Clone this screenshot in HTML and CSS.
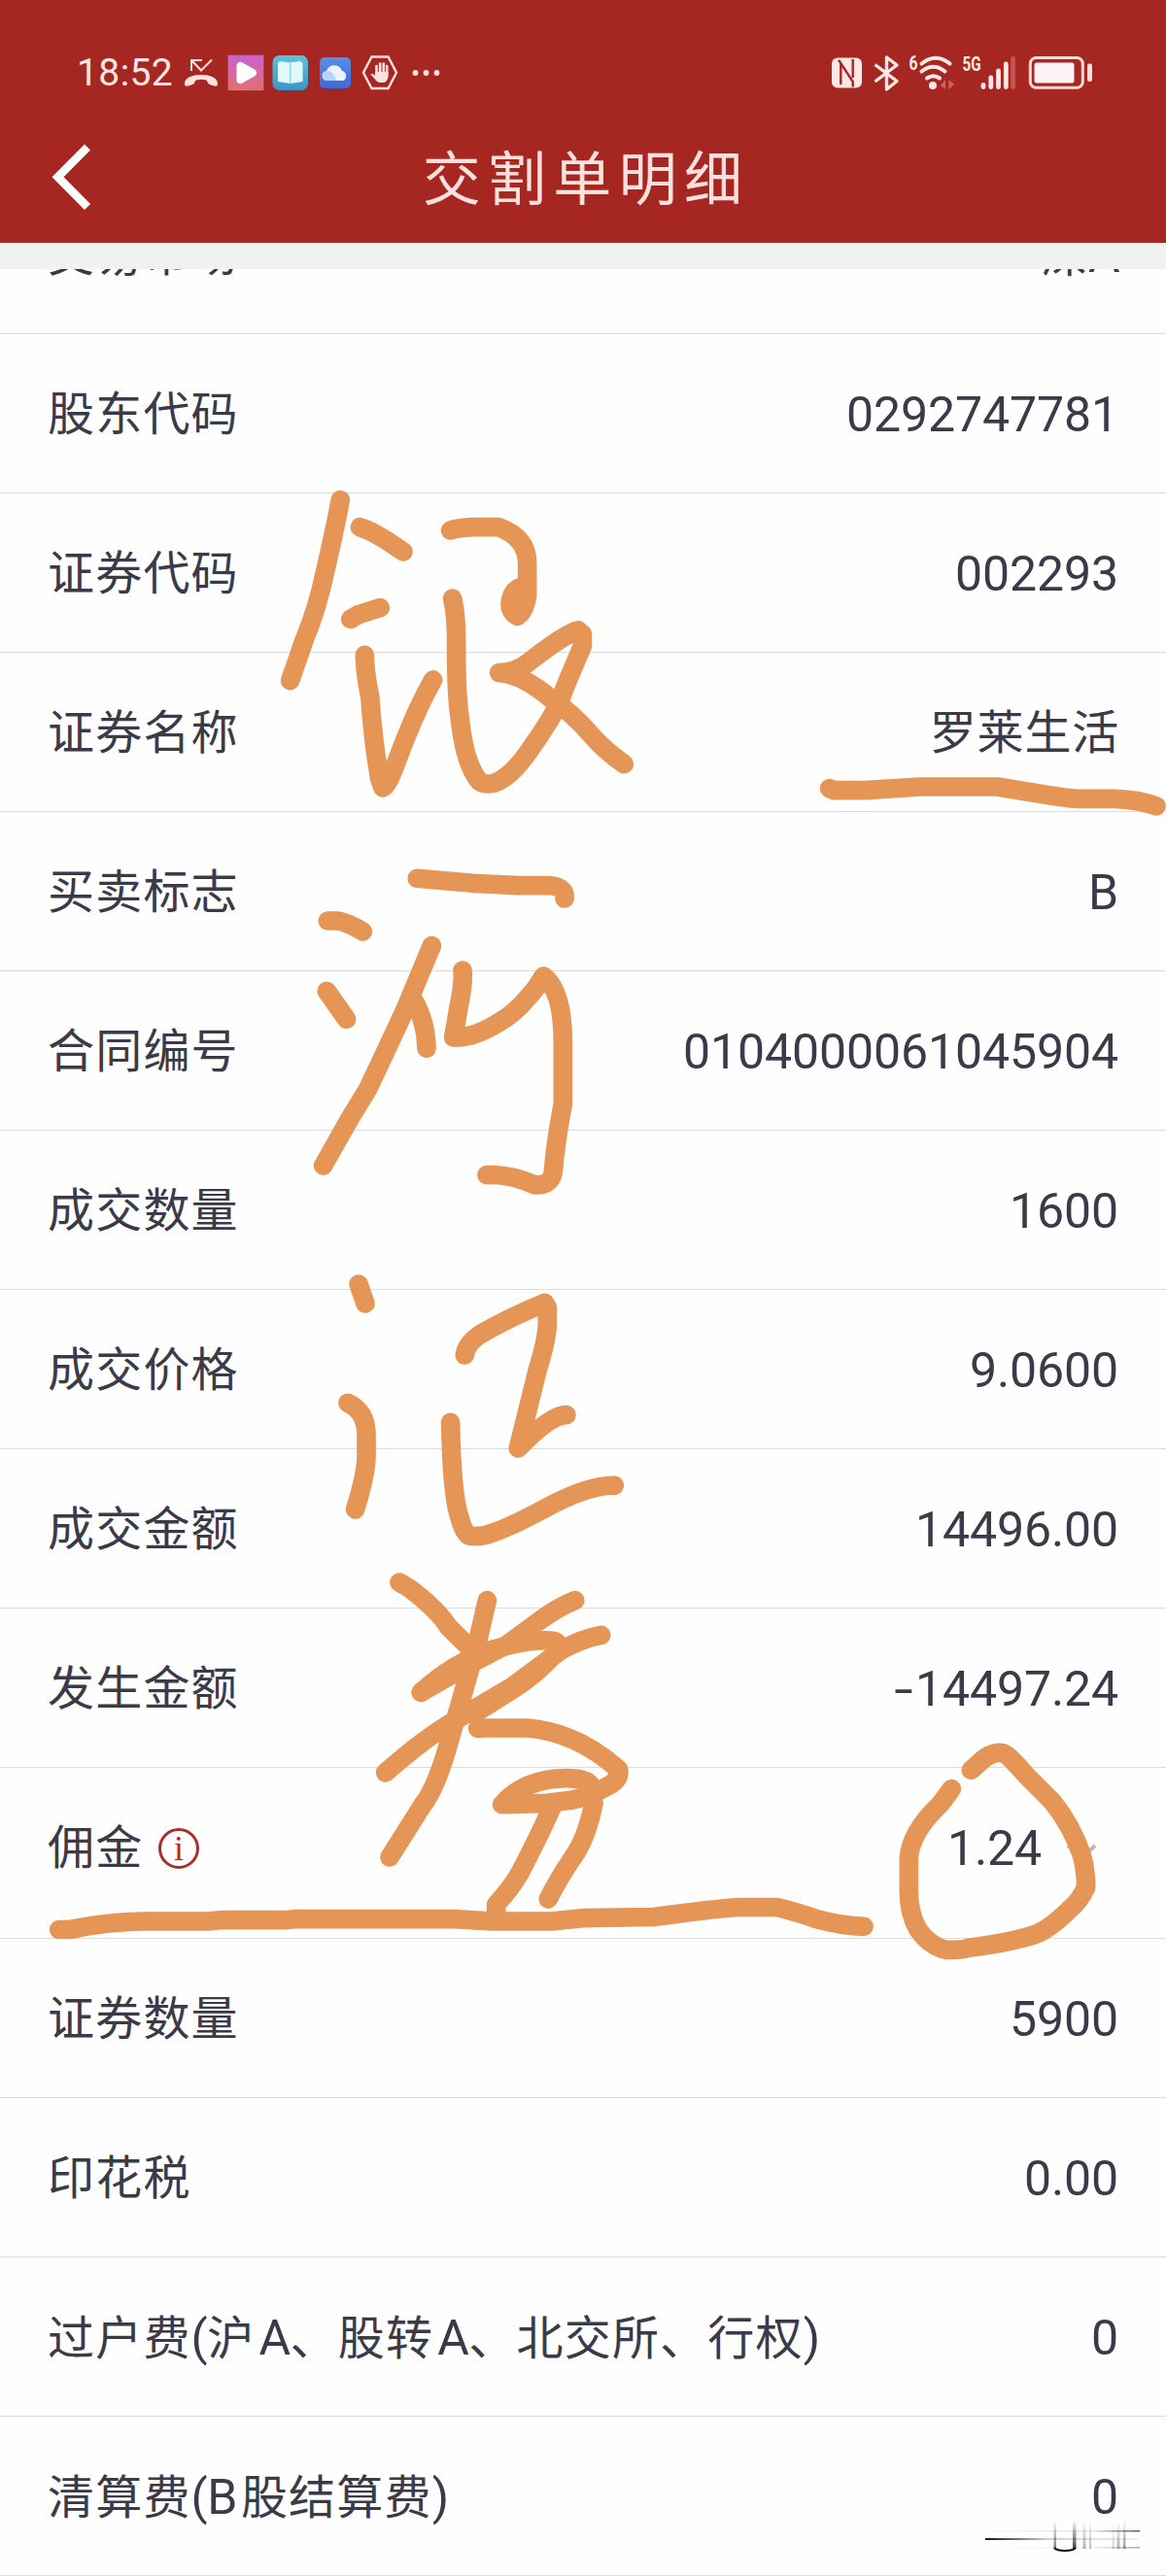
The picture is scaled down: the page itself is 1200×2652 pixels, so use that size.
FILE: index.html
```
<!DOCTYPE html>
<html lang="zh-CN">
<head>
    <meta charset="UTF-8">
    <meta name="viewport" content="width=device-width, initial-scale=1.0">
    <title>交割单明细</title>
    <link rel="stylesheet" href="styles.css">
</head>
<body>

    <header class="header">
        <div class="status-bar">
            <span class="time">18:52</span>
            <svg class="status-left" viewBox="184 50 272 50">
                <defs>
                    <linearGradient id="play-bg" x1="0" y1="0" x2="0" y2="1">
                        <stop offset="0" stop-color="#c763d3"/>
                        <stop offset="1" stop-color="#e0706f"/>
                    </linearGradient>
                    <linearGradient id="book-bg" x1="0" y1="0" x2="0" y2="1">
                        <stop offset="0" stop-color="#5cc3dc"/>
                        <stop offset="1" stop-color="#3f93c6"/>
                    </linearGradient>
                    <linearGradient id="cloud-bg" x1="0" y1="0" x2="0" y2="1">
                        <stop offset="0" stop-color="#5a8ee6"/>
                        <stop offset="1" stop-color="#3d68d8"/>
                    </linearGradient>
                </defs>
                <!-- missed call -->
                <path d="M197 73V62H208M197 62L207 72.500L218 61.500" fill="none" stroke="#ffe1dd" stroke-width="2"/>
                <path d="M190 86C190 80 198 77 207 77S224 80 224 86C224 90 221 89 215 86.500C213 85.500 214 83 212 82.500Q207 81 202 82.500C200 83 201 85.500 199 86.500C193 89 190 90 190 86Z" fill="#ffe1dd"/>
                <!-- video -->
                <rect x="234.600" y="56.700" width="36.800" height="36.400" fill="url(#play-bg)"/>
                <path d="M247.500 68V82L260 75Z" fill="#c25a9c" stroke="#fff" stroke-width="8" stroke-linejoin="round"/>
                <!-- book -->
                <rect x="280.500" y="57" width="36.500" height="36" rx="7" fill="url(#book-bg)"/>
                <path d="M286 65L288 63L298 64.500L309 63L311.500 65V84L299 86L286 84Z" fill="#e2f9fc"/>
                <path d="M298.700 65V86" stroke="#8fd6e6" stroke-width="1.500"/>
                <!-- cloud -->
                <rect x="329" y="59" width="32" height="32" rx="5" fill="url(#cloud-bg)"/>
                <path d="M337 83A5 5 0 0 1 336 73A8.500 8.500 0 0 1 352 73A5.300 5.300 0 0 1 353 83Z" fill="#eaf2ff"/>
                <path d="M337 83A5 5 0 0 1 337 73Q343 73 346 83Z" fill="#b8d2fa"/>
                <!-- hand -->
                <path d="M382.500 58.500H399.500L408 74.800L399.500 91H382.500L374 74.800Z" fill="none" stroke="#ffe1dd" stroke-width="2.400"/>
                <path d="M387.500 77V68M391.200 76V65.500M394.800 76V65.500M398.200 77V68" fill="none" stroke="#ffe1dd" stroke-width="2.600" stroke-linecap="round"/>
                <path d="M386.200 74H399.500V79Q398.500 85 394 85H391Q388 85 385.500 81L381.500 76.500Q382.500 74.500 386.200 78Z" fill="#ffe1dd"/>
                <circle cx="427.500" cy="75" r="2.900" fill="#ffe1dd"/>
                <circle cx="438.500" cy="75" r="2.900" fill="#ffe1dd"/>
                <circle cx="449.500" cy="75" r="2.900" fill="#ffe1dd"/>
            </svg>
            <svg class="status-right" viewBox="850 50 280 50">
                <!-- nfc -->
                <rect x="856" y="59.500" width="31" height="31" rx="6" fill="#ffe8e5"/>
                <path d="M865.300 87V65L877.700 84V89.500M865.300 65L863 62M877.700 61V80" fill="none" stroke="#a52823" stroke-width="2.400"/>
                <!-- bluetooth -->
                <path d="M900.500 66.500L923 83.500L912.500 92V59L923 67L900.500 84" fill="none" stroke="#ffe8e5" stroke-width="3.400" stroke-linejoin="round"/>
                <text class="tiny" x="935.500" y="71.500" textLength="9" lengthAdjust="spacingAndGlyphs">6</text>
                <!-- wifi -->
                <g fill="none" stroke="#ffe8e5" stroke-width="4" stroke-linecap="round">
                    <path d="M948.500 65.500Q963 54 977.500 65.500"/>
                    <path d="M948.500 73.500Q960.500 64 972.500 73.500"/>
                    <path d="M954 80.500Q960.500 76 967 80.500"/>
                </g>
                <circle cx="960" cy="88" r="4" fill="#ffe8e5"/>
                <path d="M973 82V92L968 88ZM976.500 82V92L982 87Z" fill="#c9635d"/>
                <text class="tiny" x="990.500" y="73" textLength="19" lengthAdjust="spacingAndGlyphs">5G</text>
                <!-- signal -->
                <g stroke="#ffe8e5" stroke-width="4.800" stroke-linecap="round">
                    <path d="M1012 87.500V89.500M1019.800 80V89.500M1027.500 73V89.500M1035.300 66V89.500"/>
                    <path d="M1042.500 60.500V89.500" stroke="#c9544f"/>
                </g>
                <!-- battery -->
                <rect x="1060.300" y="59.500" width="54" height="30.800" rx="6" fill="none" stroke="#ffdcd8" stroke-width="3"/>
                <rect x="1064.500" y="64.500" width="41" height="21" rx="2.500" fill="#fdf1f3"/>
                <rect x="1119" y="65.500" width="5" height="18.500" rx="2" fill="#ffe0dc"/>
            </svg>
        </div>
        <div class="title-bar">
            <svg class="back" viewBox="50 145 50 75">
                <path d="M90 151.500L59.500 182.300L90 213" fill="none" stroke="#fff" stroke-width="8.500"/>
            </svg>
            <h1>交割单明细</h1>
        </div>
    </header>
    <div class="strip"></div>

    <main class="list">
        <div class="row first"><span class="label">交易市场</span><span class="value cn">深<span class="en">A</span></span></div>
        <div class="row"><span class="label">股东代码</span><span class="value">0292747781</span></div>
        <div class="row"><span class="label">证券代码</span><span class="value">002293</span></div>
        <div class="row"><span class="label">证券名称</span><span class="value cn">罗莱生活</span></div>
        <div class="row"><span class="label">买卖标志</span><span class="value">B</span></div>
        <div class="row"><span class="label">合同编号</span><span class="value">0104000061045904</span></div>
        <div class="row"><span class="label">成交数量</span><span class="value">1600</span></div>
        <div class="row"><span class="label">成交价格</span><span class="value">9.0600</span></div>
        <div class="row"><span class="label">成交金额</span><span class="value">14496.00</span></div>
        <div class="row"><span class="label">发生金额</span><span class="value"><span class="minus">-</span>14497.24</span></div>
        <div class="row fee">
            <span class="label">佣金</span>
            <svg class="info" viewBox="0 0 44 44">
                <circle cx="22" cy="22" r="19.500" fill="none" stroke="#a5302d" stroke-width="3"/>
                <text x="22" y="33.500" text-anchor="middle">i</text>
            </svg>
            <span class="value">1.24</span>
            <svg class="arrow" viewBox="0 0 34 20">
                <path d="M3 3L17 16L31 3" fill="none" stroke="#b9b9bd" stroke-width="4"/>
            </svg>
        </div>
        <div class="row"><span class="label">证券数量</span><span class="value">5900</span></div>
        <div class="row"><span class="label">印花税</span><span class="value">0.00</span></div>
        <div class="row"><span class="label">过户费<span class="en">(</span>沪<span class="en gap">A</span>、股转<span class="en gap">A</span>、北交所、行权<span class="en">)</span></span><span class="value">0</span></div>
        <div class="row"><span class="label">清算费<span class="en">(B</span><span class="gap">股</span>结算费<span class="en">)</span></span><span class="value">0</span></div>
    </main>

    <!-- pen marks over the list -->
    <svg class="marks" viewBox="0 0 1200 2652">
        <g transform="translate(260 480) scale(.3333)">
            <path d="M271 104Q255 190 225 320Q200 440 160 535L116 662"/>
            <path d="M331 188Q375 200 465 264"/>
            <path d="M302 472L325 459L394 437"/>
            <path d="M346 583Q347 640 362 710Q372 850 392 965L402 993Q415 990 440 925Q500 760 557 660"/>
            <path d="M611 198Q640 188 690 188H760Q848 220 848 300V400Q840 450 817 463Q795 450 795 425Q800 385 825 375L835 420"/>
            <path d="M617 408Q629 460 629 540Q628 700 640 780Q655 920 700 973Q715 985 745 979Q800 960 860 870Q910 800 945 735Q960 690 1018 556V518L1005 507Q960 520 850 607Q810 637 761 638Q830 640 930 725Q990 765 1050 835Q1090 880 1147 920"/>
        </g>
        <g transform="translate(300 860) scale(.3333)">
            <path d="M388 133L560 148L700 155H800Q848 160 843 195"/>
            <path d="M112 264H145Q180 272 220 297"/>
            <path d="M109 481L170 568"/>
            <path d="M433 341L350 540Q290 670 235 785L180 875L98 1020"/>
            <path d="M375 505Q416 575 417 658"/>
            <path d="M528 417Q532 450 520 510L500 624Q560 628 640 578Q690 550 735 495Q755 475 778 435Q838 480 838 640V830Q815 950 808 1040Q800 1085 750 1079Q670 1045 603 1049"/>
        </g>
        <g transform="translate(320 1280) scale(.3333)">
            <path d="M147 126L168 186"/>
            <path d="M114 493Q171 520 171 590V660Q171 710 137 822"/>
            <path d="M475 345Q480 310 520 283Q610 230 722 184L730 198V250Q728 300 700 390L640 633Q740 530 789 530"/>
            <path d="M431 553Q435 780 460 850Q475 905 495 904H525Q580 895 720 820Q860 745 937 748"/>
        </g>
        <g transform="translate(340 1600) scale(.3333)">
            <path d="M213 87L245 106Q330 170 365 225L430 290"/>
            <path d="M484 143L450 290L375 550Q330 720 285 775L183 936"/>
            <path d="M755 143Q700 165 640 210L545 280L440 335L280 427"/>
            <path d="M280 427Q380 335 500 295Q620 262 680 267Q720 270 690 310Q640 370 560 420L440 495"/>
            <path d="M836 250Q780 260 715 295L560 410L400 505Q300 560 170 675"/>
            <path d="M455 538L480 537H610Q760 550 890 665Q895 695 860 715Q800 748 750 759L670 769L530 773Q600 693 730 692Q800 692 806 720L813 770Q790 880 750 935Q700 1010 673 1065"/>
            <path d="M685 780Q640 880 585 985Q560 1030 512 1082V1110"/>
        </g>
        <path class="line" d="M60.700 1986.500H72Q110 1978.500 147 1978H213L227 1976.700H293L303 1975.700H467L507 1978H567L600 1974.700L673 1973.500Q735 1965 760 1963.500H800Q825 1970 840 1975.500Q867 1983 889 1983.300"/>
        <g transform="translate(840 1700) scale(.3333)">
            <path d="M478 367L520 330Q550 310 575 314Q590 315 650 385L730 465Q790 540 820 630Q833 675 833 730Q810 775 790 790Q720 860 675 875Q600 900 470 916Q455 923 400 922Q350 910 315 860Q286 810 286 740V640Q290 560 385 470L418 425"/>
        </g>
        <g transform="translate(780 540) scale(.3333)">
            <path d="M221 815L235 821H330L500 810H740L830 825Q930 842 980 847H1100Q1180 850 1230 870"/>
        </g>
    </svg>

    <!-- faded stamp in the corner -->
    <svg class="stamp" viewBox="0 0 170 45">
        <defs>
            <linearGradient id="fade-right"><stop offset="0" stop-color="#111"/><stop offset=".4" stop-color="#111" stop-opacity=".2"/><stop offset="1" stop-color="#111" stop-opacity=".05"/></linearGradient>
            <linearGradient id="fade-left"><stop offset="0" stop-color="#111" stop-opacity=".02"/><stop offset=".7" stop-color="#111" stop-opacity=".12"/><stop offset="1" stop-color="#111" stop-opacity=".7"/></linearGradient>
            <linearGradient id="fade-down" x1="0" y1="0" x2="0" y2="1"><stop offset="0" stop-color="#111" stop-opacity="0"/><stop offset="1" stop-color="#111" stop-opacity=".8"/></linearGradient>
        </defs>
        <rect x="4" y="21" width="158" height="2" fill="url(#fade-right)"/>
        <rect x="4" y="13" width="159" height="1.500" fill="url(#fade-left)"/>
        <rect x="4" y="30" width="159" height="1.500" fill="url(#fade-left)" opacity=".5"/>
        <rect x="74.500" y="3" width="2.500" height="29" fill="url(#fade-down)" opacity=".7"/>
        <rect x="94" y="3" width="3.500" height="29" fill="url(#fade-down)"/>
        <rect x="104.500" y="3" width="3" height="29" fill="url(#fade-down)" opacity=".4"/>
        <rect x="111" y="3" width="2" height="29" fill="url(#fade-down)" opacity=".35"/>
        <rect x="135" y="3" width="1.500" height="29" fill="url(#fade-down)" opacity=".3"/>
        <rect x="139.500" y="3" width="3" height="29" fill="url(#fade-down)" opacity=".4"/>
        <rect x="146" y="3" width="2.500" height="29" fill="url(#fade-down)" opacity=".55"/>
        <path d="M75 31Q78 34 86 34T97 31" fill="none" stroke="#111" stroke-width="2"/>
    </svg>

</body>
</html>
```
FILE: styles.css
```
body {
    margin: 0;
    position: relative;
    width: 1200px;
    height: 2652px;
    background-color: #fefefe;
    color: #3a3a49;
    font-family: Roboto, "Noto Sans CJK SC", sans-serif;
    overflow: hidden;
}
.header {
    height: 251px;
    background-color: #a62722;
    border-bottom: 1px solid #f7dcd9;
    box-sizing: border-box;
}
.status-bar {
    display: flex;
    align-items: center;
    height: 100px;
    padding-top: 50px;
    box-sizing: border-box;
}
.time {
    width: 105px;
    padding-left: 79px;
    font-size: 39px;
    line-height: 50px;
    letter-spacing: 0.4px;
    color: #ffe6e3;
}
.status-left {
    width: 272px;
    height: 50px;
}
.status-right {
    width: 280px;
    height: 50px;
    margin-left: auto;
    margin-right: 70px;
}
.tiny {
    font-size: 20px;
    font-weight: bold;
    fill: #ffe8e5;
}
.title-bar {
    display: flex;
    align-items: center;
    height: 150px;
    padding: 0 50px;
}
.back {
    width: 50px;
    height: 75px;
    margin-top: 15px;
}
h1 {
    flex: 1;
    margin: 21px 44px 0 0;
    text-align: center;
    font-size: 60px;
    font-weight: normal;
    line-height: 80px;
    letter-spacing: 7.3px;
    color: #ffe0dc;
}
.strip {
    height: 26px;
    background-color: #f0f1f1;
}
.list {
    height: 2375px;
    overflow: hidden;
}
.row {
    display: flex;
    align-items: center;
    height: 164px;
    padding: 3px 49px 0;
    box-sizing: border-box;
    border-bottom: 1px solid #dcdcde;
}
.row.first {
    margin-top: -97px;
}
.row.fee {
    height: 176px;
    padding-bottom: 12px;
}
.label {
    font-size: 48px;
    letter-spacing: 1.2px;
    line-height: 60px;
    white-space: nowrap;
}
.value {
    margin-left: auto;
    font-size: 50px;
    line-height: 60px;
    letter-spacing: -0.1px;
    white-space: nowrap;
}
.value.cn {
    font-size: 48px;
    letter-spacing: 0.8px;
    margin-right: -1px;
}
.en {
    font-size: 50px;
    letter-spacing: -0.5px;
}
.gap {
    margin-left: 4px;
}
.minus {
    display: inline-block;
    transform: scaleX(1.4);
    margin-right: 5px;
}
.info {
    width: 44px;
    height: 44px;
    margin-left: 15px;
}
.info text {
    font-family: "Liberation Serif", serif;
    font-size: 36px;
    fill: #a5302d;
}
.arrow {
    width: 34px;
    height: 20px;
    margin: 8px 21px 0 24px;
}
.marks {
    position: absolute;
    left: 0;
    top: 0;
    width: 1200px;
    height: 2652px;
    fill: none;
    stroke: #e59556;
    stroke-width: 59;
    stroke-linecap: round;
    stroke-linejoin: round;
}
.line {
    stroke-width: 19.7px;
}
.stamp {
    position: absolute;
    left: 1010px;
    top: 2592px;
    width: 170px;
    height: 45px;
}
```
